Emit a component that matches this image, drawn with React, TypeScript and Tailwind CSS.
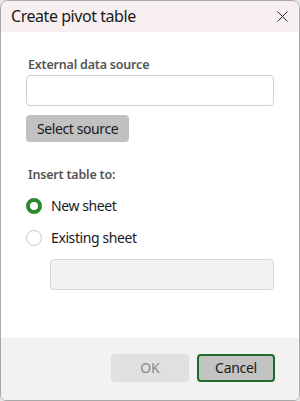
import { X } from "lucide-react";

export default function App() {
  return (
    <div className="w-[300px] h-[401px] bg-[#e6e6e6]">
      <div
        className="flex flex-col w-full h-full border border-[#a9a9a9] rounded-t-[8px] rounded-b-[6px] overflow-hidden bg-white text-[#1a1a1a]"
        style={{ fontFamily: '"Noto Sans", "Open Sans", sans-serif' }}
      >
        {/* title bar */}
        <div className="flex items-center justify-between h-[31px] bg-[#f8eff1] pl-[10px] pr-[7px]">
          <span className="text-[16px] leading-none tracking-[-0.45px] -mt-[1px]">Create pivot table</span>
          <X size={19} strokeWidth={1.2} className="text-[#222]" />
        </div>

        {/* body */}
        <div className="flex-1 flex flex-col px-[25px] pt-[24px]">
          <label className="text-[12.5px] font-semibold text-[#555] pl-[2px] leading-[18px] tracking-[-0.2px]">
            External data source
          </label>
          <input className="mt-[1px] h-[31px] w-full border border-[#cfcfcf] rounded-[4px] outline-none" />
          <button className="mt-[9px] self-start h-[27px] px-[11px] rounded-[4px] bg-[#c1c1c1] text-[14px] leading-none tracking-[-0.4px]">
            Select source
          </button>

          <label className="mt-[24px] text-[12.5px] font-semibold text-[#555] pl-[2px] leading-[18px] tracking-[-0.2px]">
            Insert table to:
          </label>

          <div className="mt-[14px] flex items-center gap-[9px] h-[16px]">
            <span className="w-[16px] h-[16px] rounded-full border-[4px] border-[#2b8a2b] bg-white" />
            <span className="text-[14px] leading-none tracking-[-0.4px]">New sheet</span>
          </div>
          <div className="mt-[16px] flex items-center gap-[9px] h-[16px]">
            <span className="w-[16px] h-[16px] rounded-full border border-[#c8c8c8] bg-white" />
            <span className="text-[14px] leading-none tracking-[-0.4px]">Existing sheet</span>
          </div>
          <div className="mt-[13px] ml-[24px] h-[31px] border border-[#d6d6d6] rounded-[4px] bg-[#f2f2f2]" />
        </div>

        {/* footer */}
        <div className="h-[62px] bg-[#f2f2f2] flex items-start justify-end gap-[8px] pt-[16px] pr-[24px]">
          <button className="w-[78px] h-[28px] rounded-[4px] bg-[#dfe0e1] text-[#8a8a8a] text-[14px] leading-none">
            OK
          </button>
          <button className="w-[78px] h-[28px] rounded-[4px] bg-[#c3c3c3] border-2 border-[#1d6b2b] text-[14px] leading-none tracking-[-0.3px]">
            Cancel
          </button>
        </div>
      </div>
    </div>
  );
}
